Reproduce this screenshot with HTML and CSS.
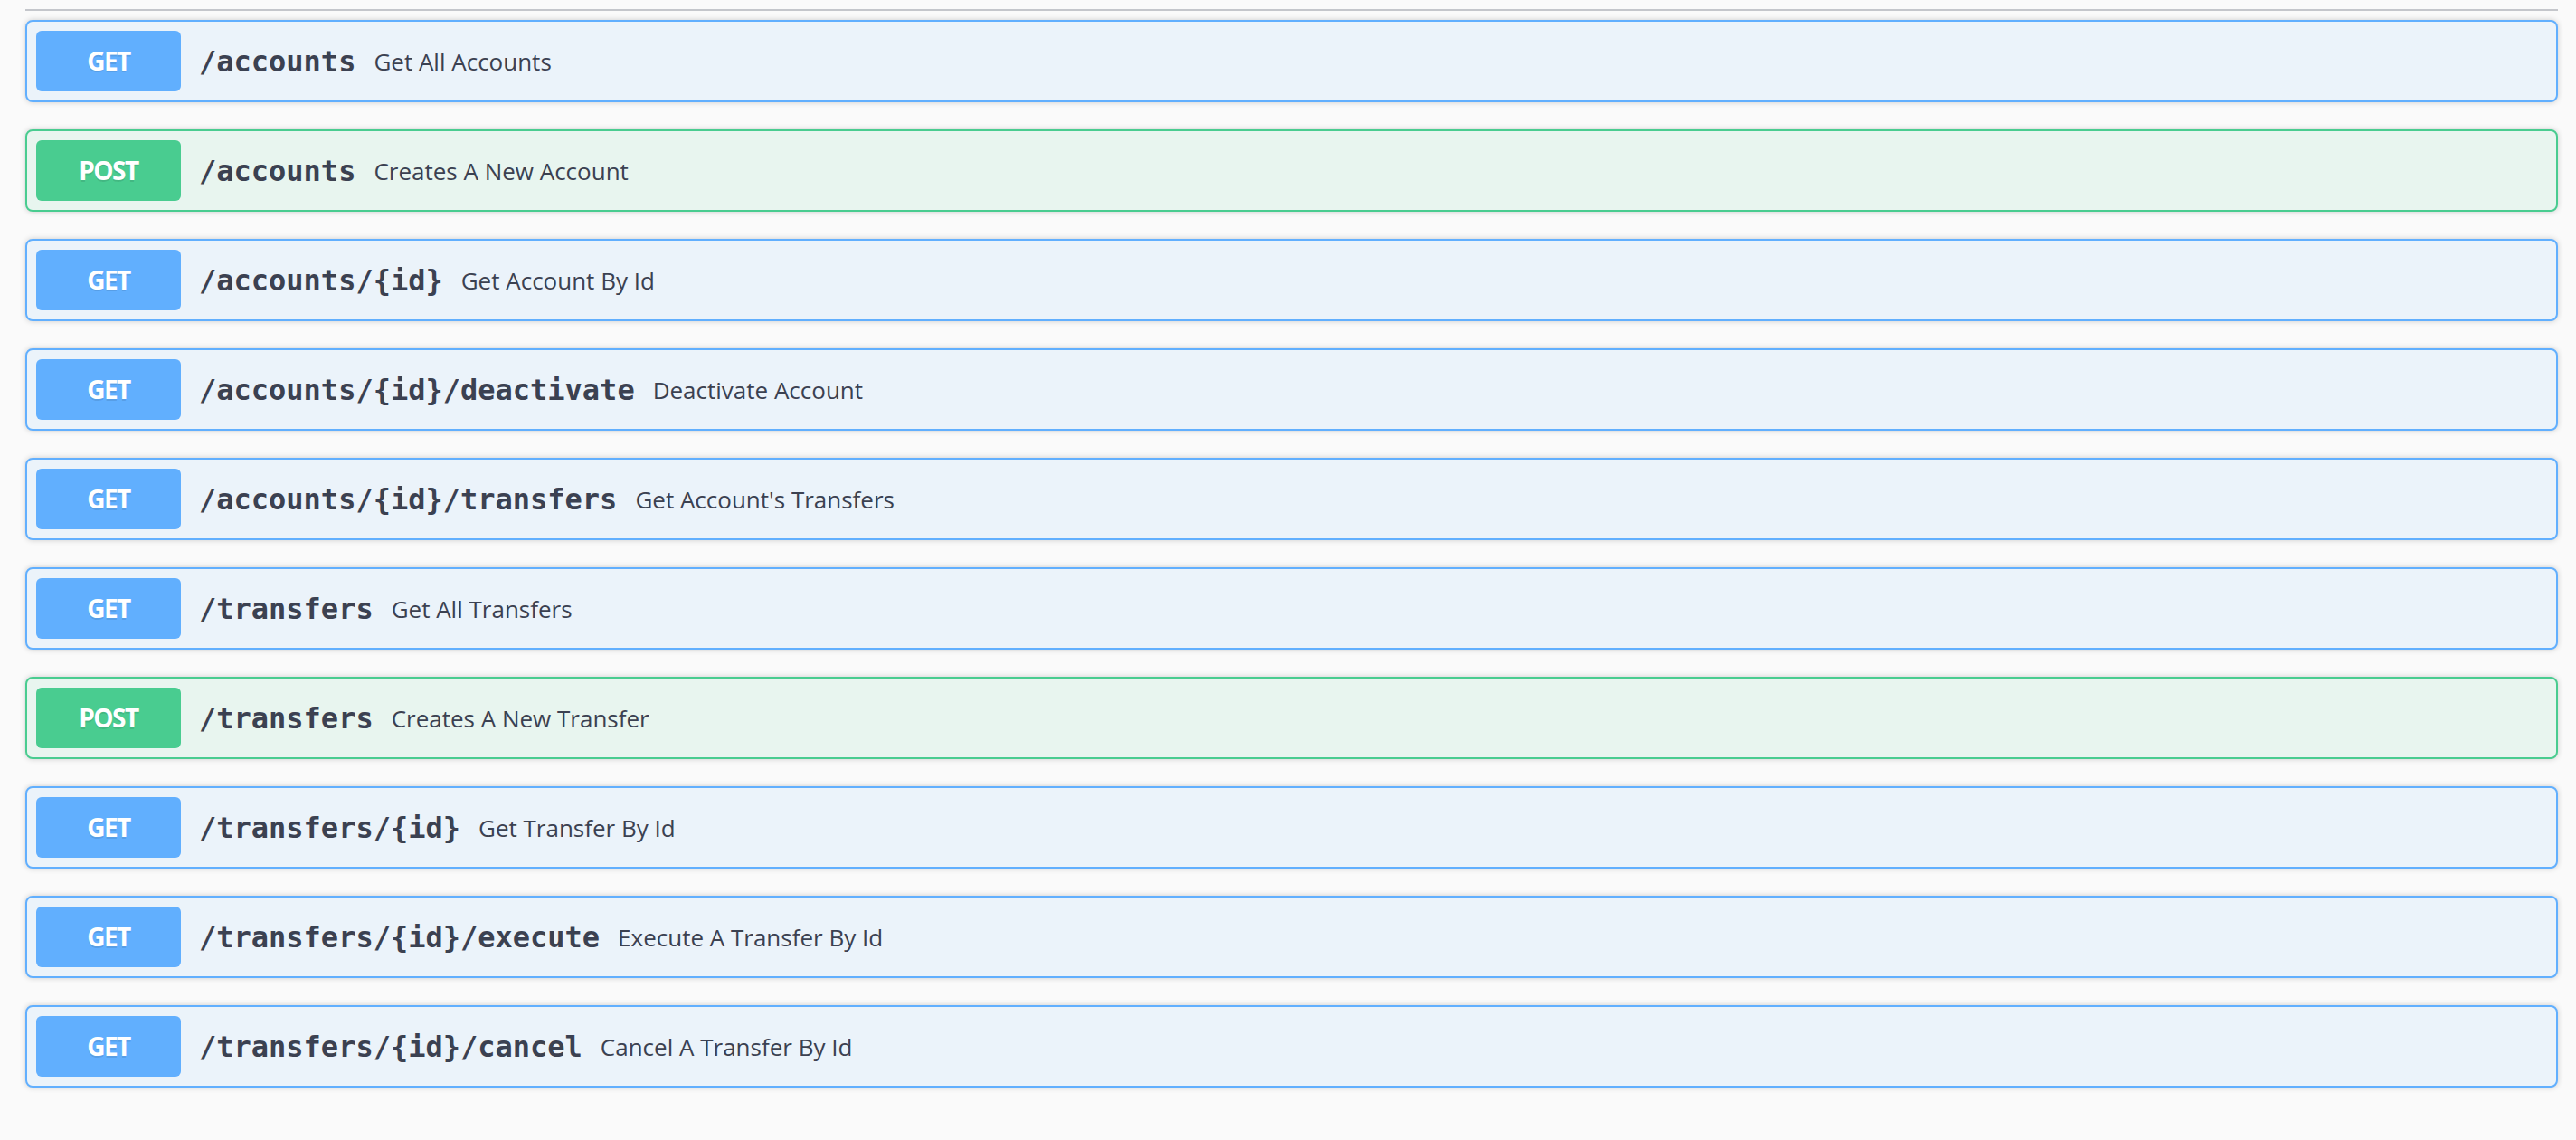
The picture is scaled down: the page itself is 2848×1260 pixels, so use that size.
FILE: index.html
```html
<!DOCTYPE html>
<html>
<head>
<meta charset="utf-8">
<link rel="stylesheet" href="styles.css">
</head>
<body>
<div class="wrapper">
  <div class="tag-rule"></div>
  <div class="ops">
    <div class="opblock get"><span class="method">GET</span><span class="path">/accounts</span><span class="desc">Get All Accounts</span></div>
    <div class="opblock post"><span class="method">POST</span><span class="path">/accounts</span><span class="desc">Creates A New Account</span></div>
    <div class="opblock get"><span class="method">GET</span><span class="path">/accounts/{id}</span><span class="desc">Get Account By Id</span></div>
    <div class="opblock get"><span class="method">GET</span><span class="path">/accounts/{id}/deactivate</span><span class="desc">Deactivate Account</span></div>
    <div class="opblock get"><span class="method">GET</span><span class="path">/accounts/{id}/transfers</span><span class="desc">Get Account's Transfers</span></div>
    <div class="opblock get"><span class="method">GET</span><span class="path">/transfers</span><span class="desc">Get All Transfers</span></div>
    <div class="opblock post"><span class="method">POST</span><span class="path">/transfers</span><span class="desc">Creates A New Transfer</span></div>
    <div class="opblock get"><span class="method">GET</span><span class="path">/transfers/{id}</span><span class="desc">Get Transfer By Id</span></div>
    <div class="opblock get"><span class="method">GET</span><span class="path">/transfers/{id}/execute</span><span class="desc">Execute A Transfer By Id</span></div>
    <div class="opblock get"><span class="method">GET</span><span class="path">/transfers/{id}/cancel</span><span class="desc">Cancel A Transfer By Id</span></div>
  </div>
</div>
</body>
</html>
```
FILE: styles.css
```css
html, body {
  margin: 0;
  padding: 0;
  background: #fafafa;
  height: 100%;
}
body {
  font-family: "Open Sans", sans-serif;
  color: #3b4151;
}
.wrapper {
  padding: 10px 20px 0 28px;
}
.tag-rule {
  height: 2px;
  background: #c4c6cb;
  margin-bottom: 10px;
}
.ops {
  display: flex;
  flex-direction: column;
  gap: 30px;
}
.opblock {
  display: flex;
  align-items: center;
  padding: 10px;
  border: 2px solid #61affe;
  border-radius: 8px;
  background: #ebf3fa;
  box-shadow: 0 0 6px rgba(0, 0, 0, 0.19);
}
.opblock.post {
  border-color: #49cc90;
  background: #e8f5ef;
}
.method {
  display: block;
  min-width: 160px;
  height: 67px;
  line-height: 67px;
  text-align: center;
  border-radius: 6px;
  background: #61affe;
  color: #fff;
  font-family: "Open Sans", sans-serif;
  font-weight: 700;
  font-size: 28px;
  letter-spacing: -1.5px;
  text-shadow: 0 2px 0 rgba(0, 0, 0, 0.1);
}
.post .method {
  background: #49cc90;
}
.path {
  padding: 0 20px;
  font-family: "DejaVu Sans Mono", monospace;
  font-weight: 700;
  font-size: 32px;
  color: #3b4151;
}
.desc {
  font-family: "Open Sans", sans-serif;
  font-size: 26px;
  color: #3b4151;
}
```
